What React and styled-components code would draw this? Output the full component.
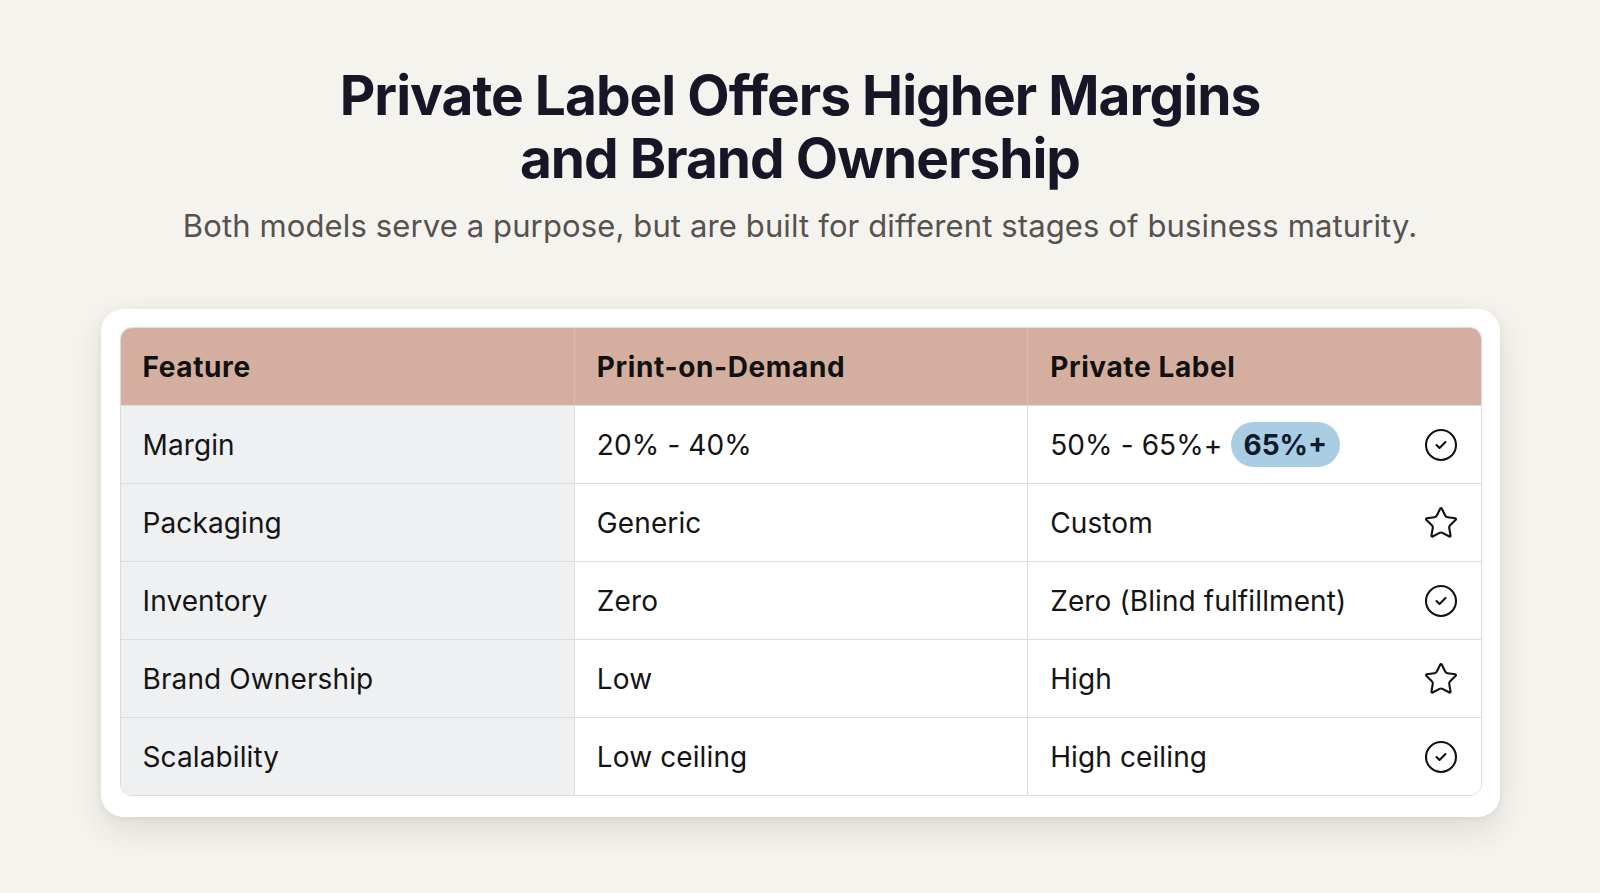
import React from "react";
import styled, { createGlobalStyle } from "styled-components";
import { CircleCheck, Star } from "lucide-react";

const GlobalStyle = createGlobalStyle`
  html, body {
    margin: 0;
    padding: 0;
    background: #f5f3ee;
  }
  body {
    font-family: Inter, "Noto Sans", sans-serif;
    color: #15151f;
  }
`;

const Page = styled.div`
  min-height: 893px;
  display: flex;
  flex-direction: column;
  align-items: center;
  padding-top: 64px;
  box-sizing: border-box;
`;

const Title = styled.h1`
  margin: 0;
  font-size: 55px;
  line-height: 63px;
  font-weight: 700;
  letter-spacing: -0.018em;
  text-align: center;
  color: #161627;
`;

const Subtitle = styled.p`
  margin: 16px 0 0;
  font-size: 31px;
  line-height: 40px;
  color: #55524f;
  text-align: center;
  letter-spacing: 0.004em;
`;

const Card = styled.div`
  margin-top: 63px;
  width: 1399px;
  box-sizing: border-box;
  padding: 18px 18px 21px 19px;
  background: #ffffff;
  border-radius: 22px;
  box-shadow: 0 12px 32px rgba(60, 50, 40, 0.12), 0 2px 6px rgba(60, 50, 40, 0.06);
`;

const Table = styled.div`
  display: grid;
  grid-template-columns: repeat(3, 1fr);
  border: 1px solid #dcdcdc;
  border-radius: 12px;
  overflow: hidden;
`;

const HeadCell = styled.div`
  height: 77px;
  display: flex;
  align-items: center;
  padding: 0 22px;
  background: #d4af9f;
  font-size: 28px;
  font-weight: 700;
  color: #111;
  letter-spacing: 0.022em;
  border-left: ${(p) => (p.first ? "none" : "1px solid #dcbcae")};
`;

const Cell = styled.div`
  height: 77px;
  display: flex;
  align-items: center;
  justify-content: space-between;
  padding: 0 22px;
  font-size: 28px;
  color: #141414;
  letter-spacing: 0.004em;
  background: ${(p) => (p.first ? "#eef0f2" : "#ffffff")};
  border-top: 1px solid #dcdcdc;
  border-left: ${(p) => (p.first ? "none" : "1px solid #dcdcdc")};
`;

const Value = styled.span`
  display: flex;
  align-items: center;
  gap: 8px;
`;

const Badge = styled.span`
  display: inline-flex;
  align-items: center;
  height: 45px;
  padding: 0 13px;
  border-radius: 23px;
  background: #a9cee4;
  color: #0e1a2c;
  font-weight: 700;
  letter-spacing: 0;
`;

const IconWrap = styled.span`
  display: flex;
  color: #111;
`;

const rows = [
  { feature: "Margin", pod: "20% - 40%", pl: "50% - 65%+", badge: "65%+", icon: "check" },
  { feature: "Packaging", pod: "Generic", pl: "Custom", icon: "star" },
  { feature: "Inventory", pod: "Zero", pl: "Zero (Blind fulfillment)", icon: "check" },
  { feature: "Brand Ownership", pod: "Low", pl: "High", icon: "star" },
  { feature: "Scalability", pod: "Low ceiling", pl: "High ceiling", icon: "check" },
];

export default function App() {
  return (
    <>
      <GlobalStyle />
      <Page>
        <Title>
          Private Label Offers Higher Margins
          <br />
          and Brand Ownership
        </Title>
        <Subtitle>
          Both models serve a purpose, but are built for different stages of business maturity.
        </Subtitle>
        <Card>
          <Table>
            <HeadCell first>Feature</HeadCell>
            <HeadCell>Print-on-Demand</HeadCell>
            <HeadCell>Private Label</HeadCell>
            {rows.map((r) => (
              <React.Fragment key={r.feature}>
                <Cell first>{r.feature}</Cell>
                <Cell>{r.pod}</Cell>
                <Cell>
                  <Value>
                    {r.pl}
                    {r.badge && <Badge>{r.badge}</Badge>}
                  </Value>
                  <IconWrap>
                    {r.icon === "check" ? (
                      <CircleCheck size={36} strokeWidth={1.4} />
                    ) : (
                      <Star size={36} strokeWidth={1.4} />
                    )}
                  </IconWrap>
                </Cell>
              </React.Fragment>
            ))}
          </Table>
        </Card>
      </Page>
    </>
  );
}
